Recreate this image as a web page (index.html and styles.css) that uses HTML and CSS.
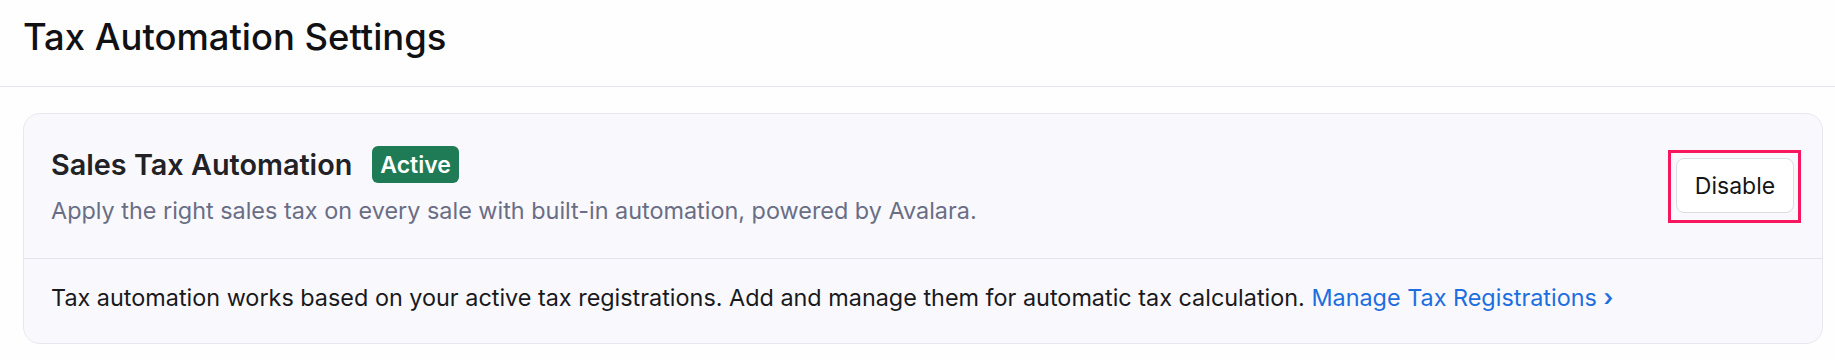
FILE: index.html
```html
<!DOCTYPE html>
<html lang="en">
<head>
<meta charset="utf-8">
<title>Tax Automation Settings</title>
<link rel="stylesheet" href="styles.css">
</head>
<body>
  <header class="page-header">
    <h1 class="page-title">Tax Automation Settings</h1>
  </header>
  <main class="page-body">
    <section class="card">
      <div class="card-top">
        <div class="card-info">
          <div class="card-heading">
            <h2 class="card-title">Sales Tax Automation</h2>
            <span class="badge">Active</span>
          </div>
          <p class="card-desc">Apply the right sales tax on every sale with built-in automation, powered by Avalara.</p>
        </div>
        <div class="highlight">
          <button class="btn" type="button">Disable</button>
        </div>
      </div>
      <div class="card-bottom">
        <p class="note">Tax automation works based on your active tax registrations. Add and manage them for automatic tax calculation. <a class="link" href="#">Manage Tax Registrations <span class="chev">›</span></a></p>
      </div>
    </section>
  </main>
</body>
</html>
```

FILE: styles.css
```css
* {
  box-sizing: border-box;
}

html, body {
  margin: 0;
  padding: 0;
  background: #fefefe;
}

body {
  font-family: "Inter", "Noto Sans", "Liberation Sans", sans-serif;
  color: #1c1c1f;
}

.page-header {
  padding: 15px 24px 27px 23px;
  border-bottom: 1px solid #e3e3eb;
}

.page-title {
  margin: 0;
  font-size: 36.4px;
  line-height: 44px;
  font-weight: 500;
  color: #111113;
}

.page-body {
  padding: 26px 12px 0 23px;
}

.card {
  background: #f9f9fd;
  border: 1px solid #e7e7ef;
  border-radius: 17px;
}

.card-top {
  display: flex;
  align-items: center;
  justify-content: space-between;
  padding: 32px 21px 31px 27px;
  border-bottom: 1px solid #e4e4ec;
}

.card-heading {
  display: flex;
  align-items: center;
  gap: 20px;
}

.card-title {
  margin: 0;
  font-size: 28.8px;
  line-height: 37px;
  font-weight: 600;
  color: #222226;
}

.badge {
  display: inline-flex;
  align-items: center;
  height: 37px;
  padding: 0 8px;
  border-radius: 6px;
  background: #1e7b55;
  color: #ffffff;
  font-size: 23px;
  font-weight: 600;
}

.card-desc {
  margin: 12px 0 0;
  font-size: 23.4px;
  line-height: 32px;
  color: #6a6e85;
}

.highlight {
  border: 3px solid #f8175f;
  padding: 5px 4px 7px 5px;
}

.btn {
  display: block;
  width: 118px;
  height: 55px;
  background: #ffffff;
  border: 1px solid #dcdce4;
  border-radius: 8px;
  font-family: inherit;
  font-size: 23px;
  color: #151517;
  cursor: pointer;
}

.card-bottom {
  padding: 23px 27px 29px;
}

.note {
  margin: 0;
  font-size: 23.4px;
  line-height: 32px;
  color: #1a1a1d;
}

.link {
  color: #1d6fe0;
  text-decoration: none;
}

.chev {
  font-weight: 600;
}
```
